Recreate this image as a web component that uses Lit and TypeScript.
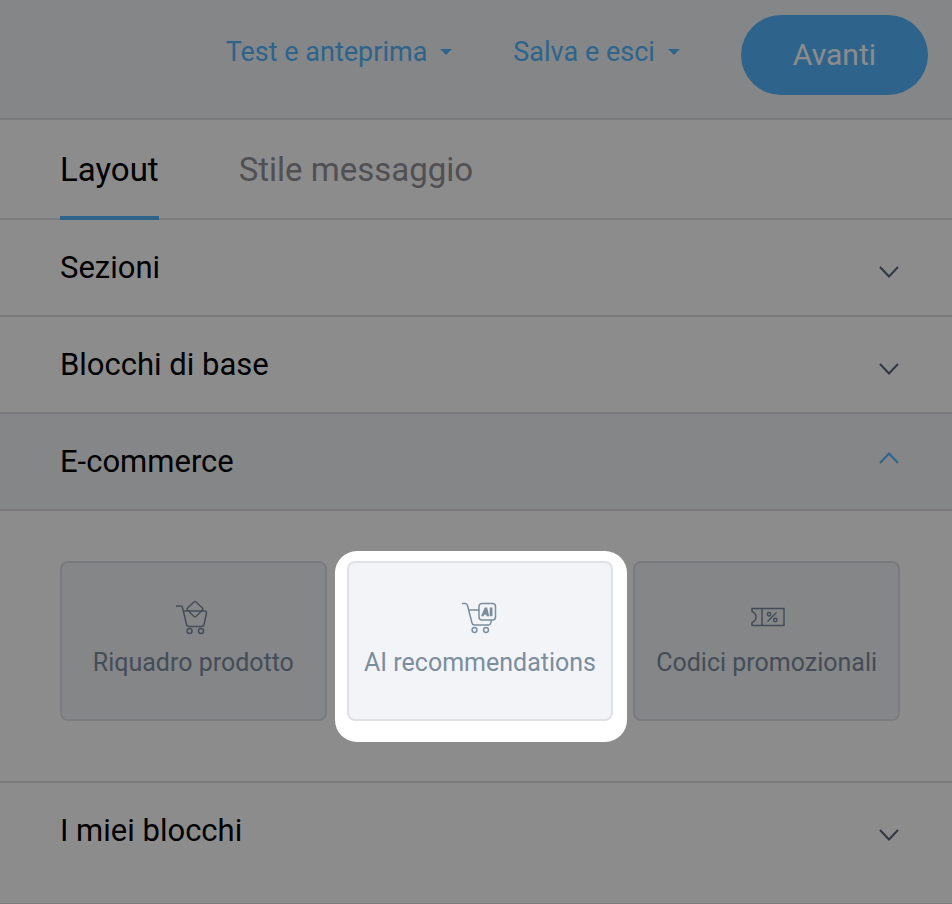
import { LitElement, html, css, svg } from "lit";
import { customElement, state } from "lit/decorators.js";
import { classMap } from "lit/directives/class-map.js";

const chevronDown = svg`<path d="M2 4 L11 13.500 L20 4" />`;
const chevronUp = svg`<path d="M2 15 L11 5.500 L20 15" />`;

const productIcon = html`<svg class="icon" viewBox="0 0 36 36" aria-hidden="true">
  <path d="M1 7h4.500q1.500 0 2 1.500l4 17q.5 2 2.500 2h12.500q2 0 2.500-2l2.500-11.500q.3-2-1.700-2H8.500" />
  <path d="M19 3l-6.500 6q-.8 1 0 2l6.500 6.500q1 .8 2 0l6.500-6.500q.8-1 0-2L21 3q-1-.8-2 0z" />
  <circle cx="14.500" cy="32" r="2.500" /><circle cx="26" cy="32" r="2.500" />
</svg>`;

const aiIcon = html`<svg class="icon" viewBox="0 0 36 36" aria-hidden="true">
  <path d="M0 4.500h3q2 0 2.500 2l4.500 17.500q.5 2 2.500 2h14q1.500 0 2-1.500l1-3.500M7 11H17" />
  <rect x="17" y="4.500" width="16.500" height="16.500" rx="3" />
  <path class="mark" d="M19 17.200L22.700 8.500h2.500L27.200 17.200h-2.600L24.300 15.800h-2.100l-.5 1.400z" />
  <rect class="mark" x="27.700" y="8.500" width="2.800" height="8.700" />
  <circle cx="12.500" cy="31" r="2.400" /><circle cx="24" cy="31" r="2.400" />
</svg>`;

const promoIcon = html`<svg class="icon" viewBox="0 0 36 36" aria-hidden="true">
  <path d="M3 9.500H35V26.500H3V23.500Q7 22 7 18T3 12.500z M13 9.500V26.500" />
  <path d="M18.500 22.500L27.500 13.500" />
  <circle cx="20" cy="15.200" r="1.700" /><circle cx="26.300" cy="21" r="1.700" />
</svg>`;

const blocks = [
  { label: "Riquadro prodotto", icon: productIcon, spot: false },
  { label: "AI recommendations", icon: aiIcon, spot: true },
  { label: "Codici promozionali", icon: promoIcon, spot: false },
];

const sections = ["Sezioni", "Blocchi di base", "E-commerce", "I miei blocchi"];

@customElement("app-root")
export class AppRoot extends LitElement {
  @state() private open = "E-commerce";
  @state() private tab = "Layout";

  static styles = css`
    :host {
      display: block;
      min-height: 100vh;
      overflow: hidden;
      background: #fff;
      color: #000;
      font-family: Roboto, "Liberation Sans", sans-serif;
    }
    * { box-sizing: border-box; }
    button {
      border: 0;
      margin: 0;
      padding: 0;
      background: none;
      color: inherit;
      font: inherit;
      cursor: pointer;
    }
    h2 { margin: 0; font: inherit; }
    .header {
      display: flex;
      justify-content: flex-end;
      align-items: flex-start;
      gap: 60px;
      padding: 15px 24px 23px;
      background: #f2f4f8;
      border-bottom: 2px solid #dcdfe0;
    }
    .menu {
      display: flex;
      align-items: center;
      gap: 12px;
      height: 74px;
      color: #54b6ff;
      font-size: 27px;
      line-height: 32px;
    }
    .caret { width: 14px; height: 8px; fill: currentColor; }
    .next {
      height: 80px;
      padding: 0 52px;
      border-radius: 40px;
      background: #54b6ff;
      color: #fff;
      font-size: 30px;
      line-height: 36px;
    }
    .tabs {
      display: flex;
      gap: 80px;
      padding: 0 60px;
      border-bottom: 2px solid #e2e2e4;
    }
    .tab {
      height: 100px;
      margin-bottom: -2px;
      padding-top: 4px;
      border-bottom: 4px solid transparent;
      color: #939399;
      font-size: 33px;
      line-height: 40px;
    }
    .tab.active { color: #000; border-color: #54b6ff; }
    .sections {
      padding-bottom: 25px;
      border-bottom: 1px solid #dedfe2;
    }
    .row {
      display: flex;
      justify-content: space-between;
      align-items: center;
      width: 100%;
      height: 97px;
      padding: 0 52px 0 60px;
      border-bottom: 2px solid #dedfe2;
      font-size: 31px;
      line-height: 36px;
      text-align: left;
    }
    .row.open { background: #f2f4f8; }
    .row.last { height: 95px; border-bottom: 0; }
    .chevron {
      width: 22px;
      height: 20px;
      fill: none;
      stroke: #5a677a;
      stroke-width: 2;
      align-self: flex-end;
      margin-bottom: 32px;
    }
    .open .chevron {
      stroke: #54b6ff;
      align-self: flex-start;
      margin-top: 34px;
    }
    .panel {
      display: grid;
      grid-template-columns: repeat(3, 1fr);
      gap: 20px;
      padding: 50px 52px 60px 60px;
      border-bottom: 2px solid #dedfe2;
    }
    .cell { position: relative; }
    .cell.spot { z-index: 1; }
    .card {
      display: flex;
      flex-direction: column;
      align-items: center;
      gap: 12px;
      width: 100%;
      height: 160px;
      padding-top: 36px;
      border: 2px solid #dfe1e5;
      border-radius: 8px;
      background: #f2f4f8;
      color: #7c8d9e;
      font-size: 25px;
      line-height: 32px;
      white-space: nowrap;
    }
    .icon {
      width: 36px;
      height: 36px;
      fill: none;
      stroke: currentColor;
      stroke-width: 1.500;
    }
    .mark { fill: currentColor; stroke: none; }
    .spotlight {
      position: absolute;
      inset: -10px -14px -21px -12px;
      border-radius: 22px;
      box-shadow: 0 0 0 4000px rgba(0, 0, 0, 0.45);
      pointer-events: none;
    }
  `;

  private menu(label: string) {
    return html`<button class="menu" aria-haspopup="menu">
      ${label}
      <svg class="caret" viewBox="0 0 14 8" aria-hidden="true"><path d="M1 1H13L7 7z" /></svg>
    </button>`;
  }

  private section(name: string, last: boolean) {
    const open = this.open === name;
    return html`
      <h2>
        <button
          class=${classMap({ row: true, open, last })}
          aria-expanded=${open}
          @click=${() => (this.open = open ? "" : name)}
        >
          ${name}
          <svg class="chevron" viewBox="0 0 22 20" aria-hidden="true">
            ${open ? chevronUp : chevronDown}
          </svg>
        </button>
      </h2>
      ${open && name === "E-commerce"
        ? html`<div class="panel">
            ${blocks.map(
              (b) => html`<div class=${classMap({ cell: true, spot: b.spot })}>
                <button class="card">${b.icon}<span>${b.label}</span></button>
                ${b.spot ? html`<div class="spotlight"></div>` : ""}
              </div>`
            )}
          </div>`
        : ""}
    `;
  }

  render() {
    return html`
      <header class="header">
        ${this.menu("Test e anteprima")} ${this.menu("Salva e esci")}
        <button class="next">Avanti</button>
      </header>
      <nav class="tabs">
        ${["Layout", "Stile messaggio"].map(
          (t) => html`<button
            class=${classMap({ tab: true, active: this.tab === t })}
            @click=${() => (this.tab = t)}
          >
            ${t}
          </button>`
        )}
      </nav>
      <main class="sections">
        ${sections.map((s, i) => this.section(s, i === sections.length - 1))}
      </main>
    `;
  }
}
